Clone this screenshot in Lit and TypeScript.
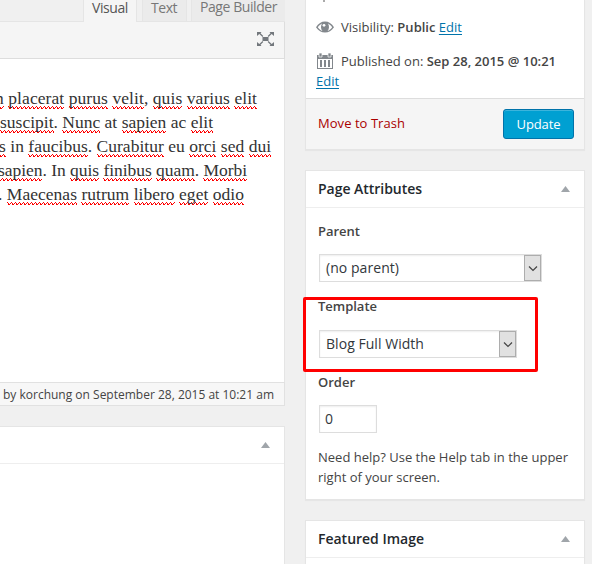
import { LitElement, html, css, svg } from "lit";
import { customElement, property } from "lit/decorators.js";

type Word = [text: string, misspelled: boolean];
interface Line { start: number; width: number; words: Word[] }

const LINES: Line[] = [
  { start: -5, width: 262, words: [["n", true], ["placerat", true], ["purus", true], ["velit", true], [",", false], ["quis", true], ["varius", true], ["elit", true]] },
  { start: 0, width: 213, words: [["suscipit", true], [".", false], ["Nunc", true], ["at", false], ["sapien", true], ["ac", false], ["elit", true]] },
  { start: -1, width: 272, words: [["s", true], ["in", false], ["faucibus", true], [".", false], ["Curabitur", true], ["eu", false], ["orci", true], ["sed", true], ["dui", true]] },
  { start: -2, width: 249, words: [["sapien", true], [".", false], ["In", false], ["quis", true], ["finibus", true], ["quam", true], [".", false], ["Morbi", true]] },
  { start: -2, width: 246, words: [[".", false], ["Maecenas", true], ["rutrum", true], ["libero", true], ["eget", true], ["odio", true]] },
];

/** Text that spreads its letters evenly over a given width. */
@customElement("fit-text")
class FitText extends LitElement {
  @property({ type: Number }) width = 0;
  static styles = css`
    :host { display: inline-block; white-space: nowrap; }
  `;
  render() { return html`<slot></slot>`; }
  firstUpdated() {
    const fit = () => {
      this.style.letterSpacing = "0px";
      const natural = this.getBoundingClientRect().width;
      const count = (this.textContent ?? "").trim().length;
      if (count) this.style.letterSpacing = `${(this.width - natural) / count}px`;
    };
    fit();
    document.fonts.ready.then(fit);
  }
}

const toggle = html`<svg width="9" height="6" viewBox="0 0 9 6"><path d="M0 6 4.5 0 9 6Z" fill="#a0a5aa"/></svg>`;
const chevron = svg`<path d="M1 1.500 5 5.500 9 1.500" fill="none" stroke="#444" stroke-width="1.2"/>`;

@customElement("app-root")
class AppRoot extends LitElement {
  static styles = css`
    * { box-sizing: border-box; }
    :host {
      display: flex; position: relative; gap: 20px; width: 592px; height: 564px; overflow: hidden;
      background: #f0f0f0; color: #444; font: 13px/20px "Open Sans", sans-serif;
    }
    svg { display: block; flex: none; }
    .main { width: 285px; flex: none; overflow: hidden; }
    .side { width: 280px; flex: none; }
    .tabs { height: 22px; display: flex; justify-content: flex-end; border-bottom: 1px solid #e5e5e5; border-right: 1px solid #e5e5e5; }
    .tab { height: 21px; background: #ebebeb; border: solid #e5e5e5; border-width: 0 1px; color: #777; padding-left: 8px; font-size: 14px; line-height: 15px; white-space: nowrap; }
    .tab.active { height: 22px; width: 54px; background: #f5f5f5; color: #555; margin-right: 5px; }
    .tab.text { width: 45px; margin-right: 4px; }
    .tab.builder { width: 94px; border-right: 0; line-height: 13px; margin-right: -1px; }
    .toolbar { height: 37px; background: #f5f5f5; border: solid #ddd; border-width: 0 1px 1px 0; display: flex; justify-content: flex-end; padding: 10px 10px 0 0; }
    .editor { height: 323px; background: #fff; border-right: 1px solid #e5e5e5; padding-top: 27px; font: 17.5px/24px "Liberation Serif", serif; color: #333; }
    .line { height: 24px; white-space: nowrap; }
    .bad {
      padding-bottom: 1px;
      background: url("data:image/svg+xml,%3Csvg xmlns='http://www.w3.org/2000/svg' width='4' height='3' shape-rendering='crispEdges'%3E%3Cpath d='M0 0h1v1H0zM1 1h1v1H1zM3 1h1v1H3zM1 2h2v1H1z' fill='%23f00'/%3E%3C/svg%3E") left bottom / 4px 3px repeat-x;
    }
    .status { height: 24px; background: #f7f7f7; border: solid #e1e1e1; border-width: 1px 1px 1px 0; padding: 1px 0 0 3px; font-size: 12px; line-height: 22px; }
    .card { background: #fff; border: 1px solid #e5e5e5; box-shadow: 0 1px 1px rgba(0,0,0,.04); }
    .lower { margin-top: 20px; height: 150px; border-left: 0; }
    .head { height: 37px; display: flex; align-items: center; justify-content: space-between; border-bottom: 1px solid #eee; padding: 0 14px 0 12px; font-weight: 600; font-size: 14px; color: #23282d; }
    .publish { height: 150px; border-top: 0; }
    .info { height: 98px; padding: 0 10px; }
    .nub { height: 2px; width: 2px; margin-left: 7px; background: #aaa; }
    .row { display: flex; align-items: center; height: 20px; }
    .row fit-text { margin-left: 7px; }
    .vis { margin-top: 15px; }
    .date { margin-top: 14px; }
    b { font-weight: 600; }
    a { color: #0073aa; text-decoration: underline; text-underline-offset: 2px; }
    a.below { display: inline-block; line-height: 18px; border-bottom: 1px solid #0073aa; text-decoration: none; height: 17px; }
    .actions { height: 51px; background: #f5f5f5; border-top: 1px solid #ddd; padding: 0 10px 0 12px; display: flex; justify-content: space-between; align-items: center; }
    .trash { color: #a00; margin-bottom: 2px; }
    .update { width: 71px; height: 30px; border: 1px solid #0073aa; border-radius: 3px; background: #00a0d2; color: #fff; box-shadow: inset 0 1px 0 rgba(120,200,230,.5); text-align: center; line-height: 29px; }
    .attributes { margin-top: 20px; height: 330px; }
    .body { padding: 13px 12px 0; }
    .label { display: block; height: 20px; font-weight: 600; }
    .select { display: flex; justify-content: space-between; height: 28px; margin: 13px 0 0 1px; border: 1px solid #ddd; box-shadow: inset 0 1px 2px rgba(0,0,0,.07); font-size: 14px; line-height: 26px; padding-left: 6px; color: #32373c; }
    .parent { width: 223px; }
    .template { width: 198px; margin-top: 14px; }
    .arrow { width: 17px; height: 26px; border: 1px solid #adadad; background: #e1e1e1; display: flex; align-items: center; justify-content: center; }
    .next { margin-top: 14px; }
    .order { margin-top: 14px; }
    .number { width: 58px; height: 28px; margin: 13px 0 0 1px; border: 1px solid #ddd; box-shadow: inset 0 1px 2px rgba(0,0,0,.07); font-size: 14px; line-height: 26px; padding-left: 5px; color: #32373c; }
    .help { margin-top: 14px; }
    .featured { margin-top: 20px; height: 80px; }
    .highlight { position: absolute; left: 303px; top: 297px; width: 235px; height: 75px; border: 3px solid #f00; border-radius: 2px; }
  `;

  private renderLine(line: Line) {
    const parts = line.words.map(([text, bad], i) => {
      const gap = i === 0 || (/^[.,]$/.test(text)) ? "" : " ";
      return html`${gap}<span class=${bad ? "bad" : ""}>${text}</span>`;
    });
    return html`<div class="line" style="margin-left:${line.start}px"><fit-text width=${line.width}>${parts}</fit-text></div>`;
  }

  render() {
    const arrow = html`<span class="arrow"><svg width="10" height="7" viewBox="0 0 10 7">${chevron}</svg></span>`;
    return html`
      <div class="main">
        <div class="tabs">
          <div class="tab active"><fit-text width="36">Visual</fit-text></div>
          <div class="tab text"><fit-text width="26">Text</fit-text></div>
          <div class="tab builder"><fit-text width="77">Page Builder</fit-text></div>
        </div>
        <div class="toolbar">
          <svg width="17" height="14" viewBox="0 0 17 14" fill="#72777c">
            <path d="M5.500 5h6v4h-6zM0 0h4.500L3.500 1.200 6.300 4.100 5.500 5 2.300 2.100 0 4zM17 0h-4.500l1 1.200-2.800 2.900.8.900 3.200-2.900L17 4zM0 14h4.500l-1-1.200 2.800-2.900-.8-.9-3.200 2.900L0 10zM17 14h-4.500l1-1.200-2.800-2.900.8-.9 3.200 2.900L17 10z"/>
          </svg>
        </div>
        <div class="editor">${LINES.map((line) => this.renderLine(line))}</div>
        <div class="status"><fit-text width="271">by korchung on September 28, 2015 at 10:21 am</fit-text></div>
        <div class="card lower"><div class="head"><span></span>${toggle}</div></div>
      </div>
      <div class="side">
        <div class="card publish">
          <div class="info">
            <div class="nub"></div>
            <div class="row vis">
              <svg width="18" height="12" viewBox="0 0 18 12">
                <path d="M0 6.200C2.300 2.400 5.500.500 9 .500s6.700 1.900 9 5.700c-2.300 3.600-5.500 5.300-9 5.300S2.300 9.800 0 6.200Z" fill="#82878c"/>
                <path d="M1.800 6.300C3 4.400 4.500 3.100 6 2.400 4.500 5 4.700 8 6.500 10 4.600 9.400 3 8.200 1.800 6.300ZM16.200 6.300C15 4.400 13.500 3.100 12 2.400c1.500 2.600 1.300 5.600-.5 7.600 1.900-.6 3.500-1.800 4.700-3.700Z" fill="#fff"/>
                <circle cx="8" cy="4.300" r="1.400" fill="#fff"/>
              </svg>
              <fit-text width="121">Visibility: <b>Public</b> <a>Edit</a></fit-text>
            </div>
            <div class="row date">
              <svg width="18" height="18" viewBox="0 0 18 18" fill="#82878c">
                <path d="M1 3h16v14H1z"/>
                <path d="M2 7h14v9H2z" fill="#fff"/>
                <path d="M4 8h2v7H4zM8 8h2v7H8zM12 8h2v7h-2z"/>
                <path d="M3 1h3v4H3zM12 1h3v4h-3z" stroke="#fff" stroke-width=".7"/>
              </svg>
              <fit-text width="215">Published on: <b>Sep 28, 2015 @ 10:21</b></fit-text>
            </div>
            <a class="below"><fit-text width="23">Edit</fit-text></a>
          </div>
          <div class="actions">
            <fit-text class="trash" width="87">Move to Trash</fit-text>
            <div class="update"><fit-text width="44">Update</fit-text></div>
          </div>
        </div>
        <div class="card attributes">
          <div class="head"><fit-text width="104">Page Attributes</fit-text>${toggle}</div>
          <div class="body">
            <div class="label"><fit-text width="42">Parent</fit-text></div>
            <div class="select parent"><fit-text width="73">(no parent)</fit-text>${arrow}</div>
            <div class="label next"><fit-text width="59">Template</fit-text></div>
            <div class="select template"><fit-text width="98">Blog Full Width</fit-text>${arrow}</div>
            <div class="label order"><fit-text width="37">Order</fit-text></div>
            <div class="number">0</div>
            <div class="help"><fit-text width="250">Need help? Use the Help tab in the upper</fit-text><br><fit-text width="122">right of your screen.</fit-text></div>
          </div>
        </div>
        <div class="card featured">
          <div class="head"><fit-text width="106">Featured Image</fit-text>${toggle}</div>
        </div>
      </div>
      <div class="highlight"></div>
    `;
  }
}
